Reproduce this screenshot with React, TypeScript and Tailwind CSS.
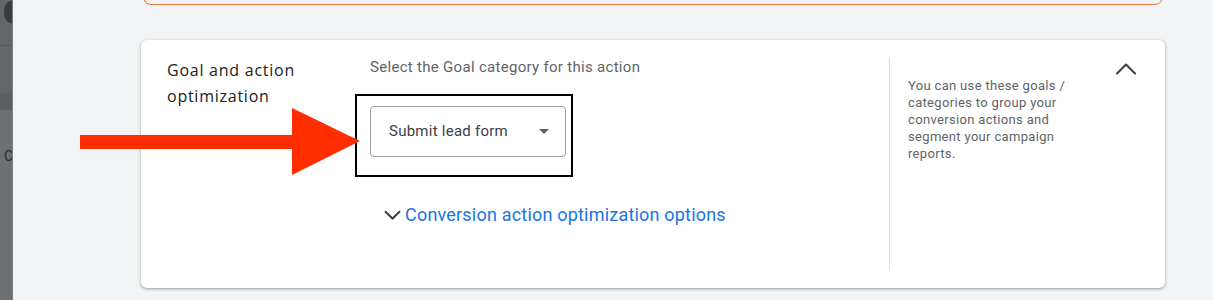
import { ChevronUp } from "lucide-react";

const HELP_TEXT =
  "You can use these goals / categories to group your conversion actions and segment your campaign reports.";

const App = () => {
  return (
    <div className="relative flex h-[300px] w-full overflow-hidden bg-[#f1f3f4] font-['Roboto',sans-serif]">
      {/* backdrop strip of the page behind */}
      <aside className="relative flex w-[13px] shrink-0 flex-col overflow-hidden bg-[#6e6f71]">
        <div className="h-[110px] bg-[#646568]">
          <div className="mt-[45px] h-px bg-[#57585b]" />
          <div className="mt-[47px] h-[17px] bg-[#5d5e61]" />
        </div>
        <span className="absolute left-[4px] top-0 h-[24px] w-[20px] rounded-full bg-[#3a3b3e]" />
        <span className="ml-[4px] mt-[39px] text-[14px] leading-none text-[#2b2c2e]">C</span>
        <div className="absolute right-0 top-0 h-full w-px bg-[#7c7d80]" />
      </aside>

      <main className="flex-1 pl-[128px] pr-[48px]">
        <div className="-mt-[16px] ml-[2px] mr-[2px] h-[21px] rounded-lg border-[1.5px] border-[#e8763a]" />

        <section className="mt-[35px] flex h-[248px] rounded-[6px] bg-white pb-[18px] pl-[26px] pt-[17px] shadow-[0_1px_2px_rgba(60,64,67,0.3),0_1px_3px_1px_rgba(60,64,67,0.15)]">
          <h2 className="w-[203px] shrink-0 font-['Open_Sans',sans-serif] text-[16px] leading-[26px] tracking-[0.75px] text-[#202124]">
            Goal and action
            <br />
            optimization
          </h2>

          <div className="flex-1">
            <p className="text-[15px] leading-[20px] tracking-[0.3px] text-[#5f6368]">
              Select the Goal category for this action
            </p>
            <div className="-ml-[15px] mt-[17px] w-[218px] border-2 border-black pb-[18px] pl-[13px] pr-[5px] pt-[10px]">
              <button
                type="button"
                className="flex h-[51px] w-[196px] items-center justify-between rounded-[4px] border border-[#9aa0a6] pl-[18px] pr-[16px] text-[15px] tracking-[0.25px] text-[#3c4043]"
              >
                <span>Submit lead form</span>
                <svg width="10" height="5" viewBox="0 0 10 5" aria-hidden="true">
                  <path d="M0 0h10L5 5z" fill="#5f6368" />
                </svg>
              </button>
            </div>
            <button
              type="button"
              className="ml-[14px] mt-[26px] flex items-center gap-[4px] text-[18px] leading-[24px] tracking-[0.2px] text-[#1a73e8]"
            >
              <svg width="17" height="10" viewBox="0 0 17 10" fill="none" aria-hidden="true">
                <path d="M1 1.2l7.5 7.3L16 1.2" stroke="#3c4043" strokeWidth="2" />
              </svg>
              Conversion action optimization options
            </button>
          </div>

          <div className="flex w-[276px] shrink-0 border-l border-[#dadce0] pl-[18px]">
            <p className="mt-[20px] w-[170px] text-[13px] leading-[17px] tracking-[0.33px] text-[#5f6368]">{HELP_TEXT}</p>
            <div className="ml-auto mr-[21px] mt-[-6px]">
              <ChevronUp size={36} strokeWidth={1.4} className="text-[#3c4043]" />
            </div>
          </div>
        </section>
      </main>

      {/* red annotation arrow */}
      <svg className="pointer-events-none absolute left-0 top-0" width="1213" height="300" aria-hidden="true">
        <rect x="80" y="135" width="214" height="14" fill="#ff2d00" />
        <polygon points="292,108 360,141 292,175" fill="#ff2d00" />
      </svg>
    </div>
  );
};

export default App;
